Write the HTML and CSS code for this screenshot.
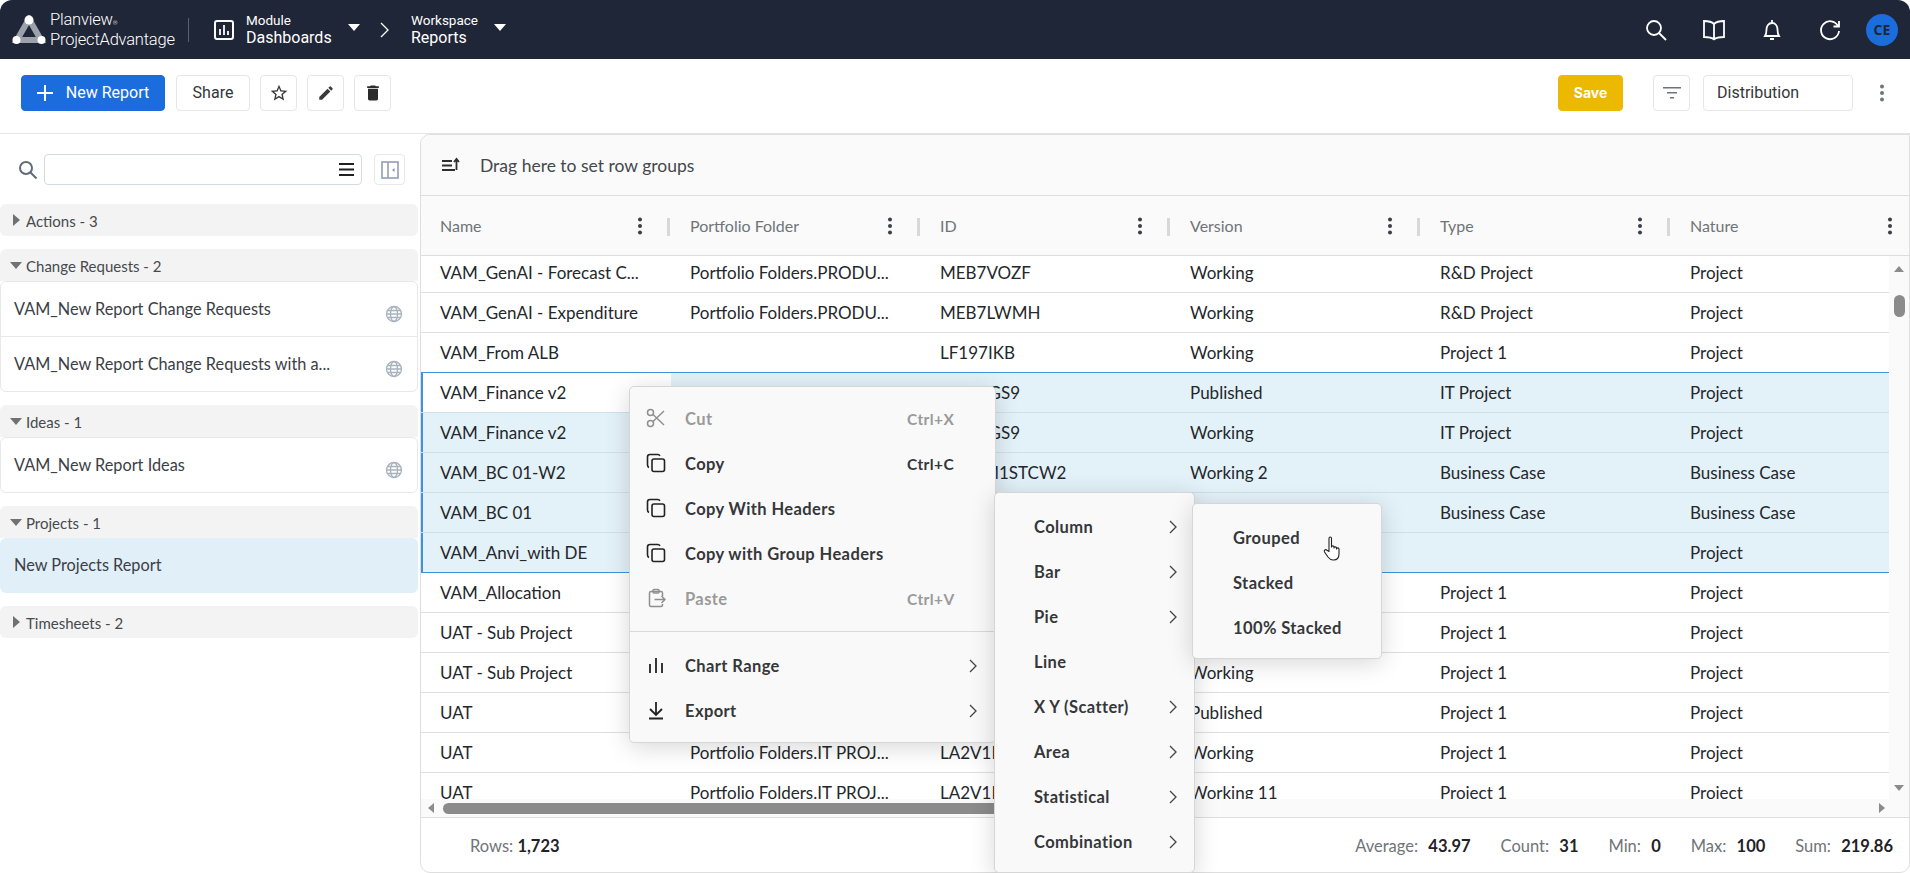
FILE: index.html
```html
<!DOCTYPE html>
<html lang="en">
<head>
    <meta charset="UTF-8">
    <title>Planview ProjectAdvantage - Reports</title>
    <link rel="stylesheet" href="styles.css">
</head>
<body>
    <svg class="icon-defs" width="0" height="0">
        <symbol id="i-kebab" viewBox="0 0 6 18"><circle cx="3" cy="2.5" r="2"/><circle cx="3" cy="9" r="2"/><circle cx="3" cy="15.5" r="2"/></symbol>
        <symbol id="i-globe" viewBox="0 0 18 18"><circle cx="9" cy="9" r="7.5"/><ellipse cx="9" cy="9" rx="3.5" ry="7.5"/><path d="M1.5 9h15M2.5 5.5h13M2.5 12.5h13"/></symbol>
        <symbol id="i-chevron" viewBox="0 0 8 14"><path d="M1 1l6 6-6 6"/></symbol>
        <symbol id="i-copy" viewBox="0 0 20 20"><path d="M3 14.5C2 14 1.5 13.5 1.5 12V4c0-1.5 1-2.5 2.5-2.5h8c1 0 1.5.5 2 1.2"/><rect x="6" y="6" width="12.5" height="12.5" rx="2"/></symbol>
    </svg>

    <header class="topbar">
        <div class="logo">
            <svg class="logo-mark" width="34" height="30" viewBox="0 0 34 30">
                <path d="M17 4 L5 25 H29 Z" fill="none" stroke="#9da1aa" stroke-width="6"/>
                <circle cx="17" cy="5" r="4.5" fill="#fff"/>
                <circle cx="4.5" cy="25" r="4" fill="#fff"/>
                <circle cx="29.5" cy="25" r="4" fill="#fff"/>
            </svg>
            <div class="logo-text">
                <span>Planview<small>®</small></span>
                <span>ProjectAdvantage</span>
            </div>
        </div>
        <div class="topbar-divider"></div>
        <svg class="nav-icon" width="20" height="20" viewBox="0 0 20 20" fill="none" stroke="#fff" stroke-width="2">
            <rect x="1" y="1" width="18" height="18" rx="2"/>
            <path d="M6 9v6M10 5v10M14 11v4" stroke-width="1.8"/>
        </svg>
        <div class="crumb crumb-module">
            <span class="crumb-label">Module</span>
            <span class="crumb-value">Dashboards</span>
        </div>
        <span class="caret"></span>
        <svg class="crumb-sep" width="12" height="18" viewBox="0 0 12 18" fill="none" stroke="#fff" stroke-width="1.3">
            <path d="M2 2l7 7-7 7"/>
        </svg>
        <div class="crumb crumb-workspace">
            <span class="crumb-label">Workspace</span>
            <span class="crumb-value">Reports</span>
        </div>
        <span class="caret"></span>

        <div class="topbar-icons">
            <svg width="24" height="24" viewBox="0 0 24 24" fill="none" stroke="#fff" stroke-width="1.8">
                <circle cx="10" cy="10" r="7"/>
                <path d="M15 15l7 7"/>
            </svg>
            <svg width="24" height="24" viewBox="0 0 24 24" fill="none" stroke="#fff" stroke-width="1.8">
                <path d="M12 6C10 4 6 3 2 3v16c4 0 8 .6 10 2.4 2-1.8 6-2.4 10-2.4V3c-4 0-8 1-10 3zM12 6v15"/>
            </svg>
            <svg width="24" height="24" viewBox="0 0 24 24" fill="none" stroke="#fff" stroke-width="1.8">
                <path d="M5 18c1-1.5 1.5-3 1.5-6.5C6.5 8 8.5 5 12 5s5.5 3 5.5 6.5c0 3.5.5 5 1.5 6.5zM12 2v3M10 21h4"/>
            </svg>
            <svg width="24" height="24" viewBox="0 0 24 24" fill="none" stroke="#fff" stroke-width="1.8">
                <path d="M20 8A9 9 0 1 0 21 13M21 3v5.5h-5.5"/>
            </svg>
            <div class="avatar">CE</div>
        </div>
    </header>

    <div class="toolbar">
        <button class="btn btn-primary">
            <svg width="16" height="16" viewBox="0 0 16 16" stroke="#fff" stroke-width="2"><path d="M8 0v16M0 8h16"/></svg>
            New Report
        </button>
        <button class="btn btn-share">Share</button>
        <button class="btn btn-icon">
            <svg width="20" height="20" viewBox="0 0 24 24" fill="#3a3a3a"><path d="M22 9.24l-7.19-.62L12 2 9.19 8.63 2 9.24l5.46 4.73L5.82 21 12 17.27 18.18 21l-1.63-7.03L22 9.24zM12 15.4l-3.76 2.27 1-4.28-3.32-2.88 4.38-.38L12 6.1l1.71 4.04 4.38.38-3.32 2.88 1 4.28L12 15.4z"/></svg>
        </button>
        <button class="btn btn-icon">
            <svg width="18" height="18" viewBox="0 0 24 24" fill="#3a3a3a"><path d="M3 17.25V21h3.75L17.81 9.94l-3.75-3.75L3 17.25zM20.71 7.04a1 1 0 0 0 0-1.41l-2.34-2.34a1 1 0 0 0-1.41 0l-1.83 1.83 3.75 3.75 1.83-1.83z"/></svg>
        </button>
        <button class="btn btn-icon">
            <svg width="20" height="20" viewBox="0 0 24 24" fill="#2b2b2b"><path d="M6 19c0 1.1.9 2 2 2h8c1.1 0 2-.9 2-2V7H6v12zM19 4h-3.5l-1-1h-5l-1 1H5v2h14V4z"/></svg>
        </button>

        <button class="btn btn-save">Save</button>
        <button class="btn btn-icon btn-filter">
            <svg width="18" height="14" viewBox="0 0 18 14" fill="#70757a"><path d="M0 1h18v1.6H0zM4 6h10v1.6H4zM7 11h4v1.6H7z"/></svg>
        </button>
        <div class="view-select">Distribution</div>
        <svg class="toolbar-kebab" width="6" height="18" fill="#70757a"><use href="#i-kebab"/></svg>
    </div>

    <main class="content">
        <aside class="sidebar">
            <div class="side-search">
                <svg width="20" height="20" viewBox="0 0 20 20" fill="none" stroke="#5f6b76" stroke-width="2">
                    <circle cx="8" cy="8" r="6"/><path d="M12.5 12.5l6 6"/>
                </svg>
                <div class="side-input">
                    <svg width="15" height="13" viewBox="0 0 15 13" fill="#1f1f1f"><path d="M0 0h15v2H0zM0 5.5h15v2H0zM0 11h15v2H0z"/></svg>
                </div>
                <button class="side-collapse">
                    <svg width="18" height="18" viewBox="0 0 18 18" fill="none" stroke="#9aa3b8" stroke-width="1.7">
                        <rect x="1" y="1" width="16" height="16"/><path d="M7 1v16"/>
                        <path d="M13.5 7v4L11 9z" fill="#8a94ad" stroke="none"/>
                    </svg>
                </button>
            </div>

            <div class="side-group">
                <div class="group-head"><span class="arrow-right"></span>Actions - 3</div>
            </div>

            <div class="side-group">
                <div class="group-head"><span class="arrow-down"></span>Change Requests - 2</div>
                <div class="group-card">
                    <div class="report-item">
                        <span>VAM_New Report Change Requests</span>
                        <svg class="globe" width="18" height="18"><use href="#i-globe"/></svg>
                    </div>
                    <div class="report-item report-item-tall">
                        <span>VAM_New Report Change Requests with a...</span>
                        <svg class="globe" width="18" height="18"><use href="#i-globe"/></svg>
                    </div>
                </div>
            </div>

            <div class="side-group">
                <div class="group-head"><span class="arrow-down"></span>Ideas - 1</div>
                <div class="group-card">
                    <div class="report-item">
                        <span>VAM_New Report Ideas</span>
                        <svg class="globe" width="18" height="18"><use href="#i-globe"/></svg>
                    </div>
                </div>
            </div>

            <div class="side-group">
                <div class="group-head"><span class="arrow-down"></span>Projects - 1</div>
                <div class="report-item report-item-active"><span>New Projects Report</span></div>
            </div>

            <div class="side-group">
                <div class="group-head"><span class="arrow-right"></span>Timesheets - 2</div>
            </div>
        </aside>

        <section class="grid-panel">
            <div class="group-bar">
                <svg width="20" height="16" viewBox="0 0 20 16" fill="none" stroke="#2f2f2f" stroke-width="1.8">
                    <path d="M1 4h10M1 8.5h10M1 13h13M15.5 13V2.5M13 5l2.5-3L18 5"/>
                </svg>
                <span>Drag here to set row groups</span>
            </div>

            <div class="grid-head">
                <div class="head-cell"><span>Name</span><svg class="kebab" width="6" height="18"><use href="#i-kebab"/></svg><i class="head-sep"></i></div>
                <div class="head-cell"><span>Portfolio Folder</span><svg class="kebab" width="6" height="18"><use href="#i-kebab"/></svg><i class="head-sep"></i></div>
                <div class="head-cell"><span>ID</span><svg class="kebab" width="6" height="18"><use href="#i-kebab"/></svg><i class="head-sep"></i></div>
                <div class="head-cell"><span>Version</span><svg class="kebab" width="6" height="18"><use href="#i-kebab"/></svg><i class="head-sep"></i></div>
                <div class="head-cell"><span>Type</span><svg class="kebab" width="6" height="18"><use href="#i-kebab"/></svg><i class="head-sep"></i></div>
                <div class="head-cell"><span>Nature</span><svg class="kebab" width="6" height="18"><use href="#i-kebab"/></svg></div>
            </div>

            <div class="grid-body">
                <div class="grid-rows">
                    <div class="rows-inner">
                        <div class="row"><div class="cell">VAM_GenAI - Forecast C...</div><div class="cell">Portfolio Folders.PRODU...</div><div class="cell">MEB7VOZF</div><div class="cell">Working</div><div class="cell">R&amp;D Project</div><div class="cell">Project</div></div>
                        <div class="row"><div class="cell">VAM_GenAI - Expenditure</div><div class="cell">Portfolio Folders.PRODU...</div><div class="cell">MEB7LWMH</div><div class="cell">Working</div><div class="cell">R&amp;D Project</div><div class="cell">Project</div></div>
                        <div class="row"><div class="cell">VAM_From ALB</div><div class="cell"></div><div class="cell">LF197IKB</div><div class="cell">Working</div><div class="cell">Project 1</div><div class="cell">Project</div></div>
                        <div class="row is-selected range-top"><div class="cell">VAM_Finance v2</div><div class="cell"></div><div class="cell">LF19KGS9</div><div class="cell">Published</div><div class="cell">IT Project</div><div class="cell">Project</div></div>
                        <div class="row is-selected"><div class="cell">VAM_Finance v2</div><div class="cell"></div><div class="cell">LF19KGS9</div><div class="cell">Working</div><div class="cell">IT Project</div><div class="cell">Project</div></div>
                        <div class="row is-selected"><div class="cell">VAM_BC 01-W2</div><div class="cell"></div><div class="cell">LB2QM1STCW2</div><div class="cell">Working 2</div><div class="cell">Business Case</div><div class="cell">Business Case</div></div>
                        <div class="row is-selected"><div class="cell">VAM_BC 01</div><div class="cell"></div><div class="cell"></div><div class="cell"></div><div class="cell">Business Case</div><div class="cell">Business Case</div></div>
                        <div class="row is-selected range-bottom"><div class="cell">VAM_Anvi_with DE</div><div class="cell"></div><div class="cell"></div><div class="cell"></div><div class="cell"></div><div class="cell">Project</div></div>
                        <div class="row"><div class="cell">VAM_Allocation</div><div class="cell"></div><div class="cell"></div><div class="cell"></div><div class="cell">Project 1</div><div class="cell">Project</div></div>
                        <div class="row"><div class="cell">UAT - Sub Project</div><div class="cell"></div><div class="cell"></div><div class="cell"></div><div class="cell">Project 1</div><div class="cell">Project</div></div>
                        <div class="row"><div class="cell">UAT - Sub Project</div><div class="cell"></div><div class="cell"></div><div class="cell">Working</div><div class="cell">Project 1</div><div class="cell">Project</div></div>
                        <div class="row"><div class="cell">UAT</div><div class="cell"></div><div class="cell"></div><div class="cell">Published</div><div class="cell">Project 1</div><div class="cell">Project</div></div>
                        <div class="row"><div class="cell">UAT</div><div class="cell">Portfolio Folders.IT PROJ...</div><div class="cell">LA2V1N</div><div class="cell">Working</div><div class="cell">Project 1</div><div class="cell">Project</div></div>
                        <div class="row"><div class="cell">UAT</div><div class="cell">Portfolio Folders.IT PROJ...</div><div class="cell">LA2V1N</div><div class="cell">Working 11</div><div class="cell">Project 1</div><div class="cell">Project</div></div>
                    </div>
                </div>
                <div class="vscroll">
                    <span class="sb-up"></span>
                    <span class="vthumb"></span>
                    <span class="sb-down"></span>
                </div>
            </div>
            <div class="hscroll">
                <span class="sb-left"></span>
                <span class="hthumb"></span>
                <span class="sb-right"></span>
            </div>

            <footer class="status-bar">
                <div class="stat-rows">Rows: <b>1,723</b></div>
                <div class="stats">
                    <span>Average: <b>43.97</b></span>
                    <span>Count: <b>31</b></span>
                    <span>Min: <b>0</b></span>
                    <span>Max: <b>100</b></span>
                    <span>Sum: <b>219.86</b></span>
                </div>
            </footer>
        </section>
    </main>

    <!-- context menus sit over the grid -->
    <div class="menu menu-main">
        <div class="menu-item is-disabled">
            <svg class="menu-icon" width="20" height="20" viewBox="0 0 20 20" fill="none" stroke="#8f8f8f" stroke-width="1.5">
                <circle cx="4.5" cy="4.5" r="3"/><circle cx="4.5" cy="15.5" r="3"/><path d="M7 6.5L18 17M7 13.5L18 3"/>
            </svg>
            <span class="menu-label">Cut</span><span class="menu-key">Ctrl+X</span>
        </div>
        <div class="menu-item">
            <svg class="menu-icon icon-copy" width="20" height="20"><use href="#i-copy"/></svg>
            <span class="menu-label">Copy</span><span class="menu-key">Ctrl+C</span>
        </div>
        <div class="menu-item">
            <svg class="menu-icon icon-copy" width="20" height="20"><use href="#i-copy"/></svg>
            <span class="menu-label">Copy With Headers</span>
        </div>
        <div class="menu-item">
            <svg class="menu-icon icon-copy" width="20" height="20"><use href="#i-copy"/></svg>
            <span class="menu-label">Copy with Group Headers</span>
        </div>
        <div class="menu-item is-disabled">
            <svg class="menu-icon" width="20" height="20" viewBox="0 0 20 20" fill="none" stroke="#8f8f8f" stroke-width="1.5">
                <path d="M16.5 8V5c0-1-.6-1.5-1.5-1.5H5C4 3.5 3.5 4 3.5 5v12c0 1 .5 1.5 1.5 1.5h10c1 0 1.5-.5 1.5-1.5v-1"/><rect x="7" y="1.5" width="6" height="3.5" rx="1"/><path d="M8.5 11.5H19M15.5 8l3.5 3.5-3.5 3.5"/>
            </svg>
            <span class="menu-label">Paste</span><span class="menu-key">Ctrl+V</span>
        </div>
        <div class="menu-rule"></div>
        <div class="menu-item">
            <svg class="menu-icon" width="20" height="20" viewBox="0 0 20 20" fill="none" stroke="#222" stroke-width="1.8">
                <path d="M4 9v9M10 3v15M16 8v10"/>
            </svg>
            <span class="menu-label">Chart Range</span>
            <svg class="menu-chevron" width="8" height="14"><use href="#i-chevron"/></svg>
        </div>
        <div class="menu-item">
            <svg class="menu-icon" width="20" height="20" viewBox="0 0 20 20" fill="none" stroke="#222" stroke-width="1.8">
                <path d="M10 2v12M4 9l6 6 6-6M3 18.5h14"/>
            </svg>
            <span class="menu-label">Export</span>
            <svg class="menu-chevron" width="8" height="14"><use href="#i-chevron"/></svg>
        </div>
    </div>

    <div class="menu menu-chart">
        <div class="menu-item"><span class="menu-label">Column</span><svg class="menu-chevron" width="8" height="14"><use href="#i-chevron"/></svg></div>
        <div class="menu-item"><span class="menu-label">Bar</span><svg class="menu-chevron" width="8" height="14"><use href="#i-chevron"/></svg></div>
        <div class="menu-item"><span class="menu-label">Pie</span><svg class="menu-chevron" width="8" height="14"><use href="#i-chevron"/></svg></div>
        <div class="menu-item"><span class="menu-label">Line</span></div>
        <div class="menu-item"><span class="menu-label">X Y (Scatter)</span><svg class="menu-chevron" width="8" height="14"><use href="#i-chevron"/></svg></div>
        <div class="menu-item"><span class="menu-label">Area</span><svg class="menu-chevron" width="8" height="14"><use href="#i-chevron"/></svg></div>
        <div class="menu-item"><span class="menu-label">Statistical</span><svg class="menu-chevron" width="8" height="14"><use href="#i-chevron"/></svg></div>
        <div class="menu-item"><span class="menu-label">Combination</span><svg class="menu-chevron" width="8" height="14"><use href="#i-chevron"/></svg></div>
    </div>

    <div class="menu menu-sub">
        <div class="menu-item"><span class="menu-label">Grouped</span></div>
        <div class="menu-item"><span class="menu-label">Stacked</span></div>
        <div class="menu-item"><span class="menu-label">100% Stacked</span></div>
    </div>

    <svg class="hand-cursor" width="20" height="26" viewBox="0 0 20 26" fill="#fff" stroke="#222" stroke-width="1.1" stroke-linejoin="round">
        <path d="M6 2.5c0-2 2.5-2 2.5 0V11c0-1.5 2.5-1.5 2.5 0v1c0-1.5 2.5-1.5 2.5 0v1c0-1.5 2.5-1.5 2.5 0v5c0 3.5-2 6-5.5 6H10c-2.5 0-3.5-1-5-3l-3.5-5c-1-1.8 1-3 2.5-1.8L6 15.5z"/>
    </svg>
</body>
</html>
```

FILE: styles.css
```css
* {
    box-sizing: border-box;
}

html, body {
    margin: 0;
    padding: 0;
    height: 873px;
    overflow: hidden;
    background: #fff;
    font-family: Lato, "Liberation Sans", sans-serif;
    color: #2b2f33;
}

body {
    display: flex;
    flex-direction: column;
}

button {
    font-family: inherit;
}

.icon-defs {
    position: absolute;
}

/* top bar */
.topbar {
    height: 59px;
    flex: none;
    display: flex;
    align-items: center;
    background: #1f2637;
    color: #fff;
    border-radius: 12px 12px 0 0;
    font-family: Roboto, "Liberation Sans", sans-serif;
    padding-left: 12px;
}

.logo {
    display: flex;
    align-items: center;
    width: 176px;
}

.logo-mark {
    flex: none;
    margin-right: 4px;
}

.logo-text {
    display: flex;
    flex-direction: column;
    font-size: 16.5px;
    font-weight: 300;
    line-height: 17px;
    letter-spacing: -0.2px;
    white-space: nowrap;
}

.logo-text small {
    font-size: 6px;
}

.topbar-divider {
    width: 1px;
    height: 24px;
    background: #596073;
    margin-right: 25px;
}

.nav-icon {
    margin-right: 12px;
}

.crumb {
    display: flex;
    flex-direction: column;
}

.crumb-label {
    font-size: 13.5px;
    line-height: 15px;
}

.crumb-value {
    font-size: 16px;
    line-height: 19px;
}

.crumb-module {
    width: 102px;
}

.crumb-workspace {
    width: 83px;
}

.caret {
    width: 0;
    height: 0;
    border-left: 6.5px solid transparent;
    border-right: 6.5px solid transparent;
    border-top: 7px solid #fff;
    margin-top: -4px;
}

.crumb-sep {
    margin: 0 20px 0 19px;
}

.topbar-icons {
    margin-left: auto;
    display: flex;
    align-items: center;
    gap: 34px;
    padding-right: 12px;
}

.avatar {
    width: 32px;
    height: 32px;
    margin-left: -10px;
    border-radius: 50%;
    background: #1b6ddd;
    color: #1f2637;
    font-size: 14px;
    font-weight: 700;
    text-align: center;
    line-height: 32px;
    font-family: "Open Sans", sans-serif;
}

/* toolbar */
.toolbar {
    height: 75px;
    flex: none;
    display: flex;
    align-items: center;
    padding: 0 25px 7px 21px;
    border-bottom: 1px solid #e4e4e4;
    font-family: Roboto, "Liberation Sans", sans-serif;
}

.btn {
    height: 36px;
    border: 1px solid #e6e6e6;
    border-radius: 4px;
    background: #fff;
    font-size: 16px;
    color: #33363a;
    padding: 0;
    display: flex;
    align-items: center;
    justify-content: center;
}

.btn-primary {
    width: 144px;
    background: #1b6ddd;
    border-color: #1b6ddd;
    color: #fff;
    gap: 13px;
    margin-right: 11px;
}

.btn-share {
    width: 74px;
    margin-right: 10px;
}

.btn-icon {
    width: 37px;
    margin-right: 10px;
}

.btn-save {
    width: 65px;
    margin-left: auto;
    margin-right: 30px;
    background: #ecb800;
    border-color: #ecb800;
    color: #fff;
    font-weight: 700;
    font-family: Inter, sans-serif;
    font-size: 14px;
}

.btn-filter {
    margin-right: 13px;
}

.view-select {
    width: 150px;
    height: 36px;
    border: 1px solid #e6e6e6;
    border-radius: 4px;
    font-size: 16px;
    line-height: 34px;
    padding-left: 13px;
    color: #33363a;
}

.toolbar-kebab {
    margin-left: 26px;
}

/* main area */
.content {
    flex: 1;
    min-height: 0;
    display: flex;
}

.sidebar {
    width: 420px;
    flex: none;
    padding: 20px 2px 0 0;
}

.side-search {
    display: flex;
    align-items: center;
    height: 31px;
    padding-left: 18px;
    margin-bottom: 19px;
}

.side-input {
    width: 318px;
    height: 31px;
    margin-left: 6px;
    border: 1px solid #d5dae0;
    border-radius: 4px;
    display: flex;
    align-items: center;
    justify-content: flex-end;
    padding-right: 7px;
}

.side-collapse {
    width: 31px;
    height: 31px;
    margin-left: 12px;
    padding: 0;
    background: #fff;
    border: 1px solid #e8e8e8;
    border-radius: 4px;
    display: flex;
    align-items: center;
    justify-content: center;
}

.side-group {
    margin-bottom: 13px;
}

.group-head {
    height: 32px;
    padding: 2px 0 0 26px;
    background: #f3f3f3;
    border-radius: 6px 6px 0 0;
    display: flex;
    align-items: center;
    font-size: 15px;
    color: #464a4e;
    position: relative;
}

.side-group > .group-head:only-child {
    border-radius: 6px;
}

.arrow-right {
    position: absolute;
    left: 13px;
    top: 10px;
    border-top: 6px solid transparent;
    border-bottom: 6px solid transparent;
    border-left: 7px solid #6e7272;
}

.arrow-down {
    position: absolute;
    left: 10px;
    top: 13px;
    border-left: 6px solid transparent;
    border-right: 6px solid transparent;
    border-top: 7px solid #6e7272;
}

.group-card {
    border: 1px solid #e8e8e8;
    border-radius: 6px;
    background: #fff;
}

.report-item {
    height: 54px;
    display: flex;
    justify-content: space-between;
    padding: 16px 14px 0 13px;
    font-size: 16.3px;
    line-height: 22px;
    color: #3c4046;
}

.report-item + .report-item {
    border-top: 1px solid #e8e8e8;
}

.report-item-tall {
    height: 55px;
}

.globe {
    margin-top: 7px;
    flex: none;
    fill: none;
    stroke: #a8b2be;
    stroke-width: 1.3;
}

.report-item-active {
    height: 55px;
    background: #e1eff9;
    border-radius: 6px;
    padding-left: 14px;
}

/* grid */
.grid-panel {
    flex: 1;
    min-width: 0;
    display: flex;
    flex-direction: column;
    border: 1px solid #dedede;
    border-radius: 10px 0 10px 10px;
    overflow: hidden;
}

.group-bar {
    height: 61px;
    flex: none;
    display: flex;
    align-items: center;
    gap: 19px;
    padding-left: 20px;
    background: #fafafa;
    border-bottom: 1px solid #dedede;
    font-size: 17.5px;
    color: #44484c;
}

.grid-head {
    height: 60px;
    flex: none;
    display: flex;
    background: #fafafa;
    border-bottom: 1px solid #dedede;
}

.head-cell {
    width: 250px;
    flex: none;
    padding-left: 19px;
    display: flex;
    align-items: center;
    position: relative;
    font-size: 16px;
    color: #6f7478;
}

.kebab {
    position: absolute;
    left: 216px;
    top: 21px;
    fill: #3a3f45;
}

.head-sep {
    position: absolute;
    left: 246px;
    top: 22px;
    width: 3px;
    height: 18px;
    background: #d8d8d8;
}

.grid-body {
    flex: 1;
    min-height: 0;
    display: flex;
}

.grid-rows {
    flex: 1;
    min-width: 0;
    overflow: hidden;
}

.rows-inner {
    margin-top: -3px;
}

.row {
    display: flex;
    height: 40px;
    border-bottom: 1px solid #dedede;
}

.cell {
    width: 250px;
    flex: none;
    padding-left: 19px;
    font-size: 17px;
    line-height: 39px;
    color: #24272b;
    white-space: nowrap;
}

.row.is-selected {
    background: #e3f1f8;
    border-bottom-color: #d3dfe6;
}

.row.is-selected .cell:first-child {
    box-shadow: inset 2px 0 0 #3e93e0;
}

.row.range-top {
    box-shadow: 0 -1px 0 #3e93e0;
}

.row.range-top .cell:first-child {
    background: #fff;
}

.row.range-bottom {
    border-bottom-color: #3e93e0;
}

.vscroll {
    width: 20px;
    flex: none;
    background: #fafafa;
    display: flex;
    flex-direction: column;
    align-items: center;
    padding: 10px 0 8px;
}

.sb-up {
    border-left: 5px solid transparent;
    border-right: 5px solid transparent;
    border-bottom: 6px solid #8b8b8b;
}

.vthumb {
    width: 11px;
    height: 22px;
    margin-top: 23px;
    border-radius: 6px;
    background: #8b8b8b;
}

.sb-down {
    margin-top: auto;
    border-left: 5px solid transparent;
    border-right: 5px solid transparent;
    border-top: 6px solid #8b8b8b;
}

.hscroll {
    height: 19px;
    flex: none;
    display: flex;
    align-items: center;
    background: #fafafa;
    border-bottom: 1px solid #dedede;
    padding: 0 24px 0 7px;
}

.sb-left {
    border-top: 5px solid transparent;
    border-bottom: 5px solid transparent;
    border-right: 6px solid #8b8b8b;
}

.hthumb {
    width: 620px;
    height: 11px;
    margin-left: 9px;
    border-radius: 6px;
    background: #8b8b8b;
}

.sb-right {
    margin-left: auto;
    border-top: 5px solid transparent;
    border-bottom: 5px solid transparent;
    border-left: 6px solid #8b8b8b;
}

.status-bar {
    height: 54px;
    flex: none;
    display: flex;
    align-items: center;
    justify-content: space-between;
    padding: 2px 16px 0 49px;
    font-size: 16.5px;
    color: #6f7478;
}

.status-bar b {
    color: #1f2226;
    font-weight: 700;
}

.stats {
    display: flex;
    gap: 30px;
}

.stats b {
    margin-left: 6px;
}

/* context menus */
.menu {
    position: absolute;
    background: #f9f9f9;
    border: 1px solid #d6d6d6;
    border-radius: 5px;
    box-shadow: 0 4px 24px rgba(0, 0, 0, 0.16);
    font-size: 16.5px;
    font-weight: 700;
    letter-spacing: 0.4px;
    color: #35373a;
}

.menu-main {
    left: 629px;
    top: 386px;
    width: 367px;
    height: 357px;
    padding-top: 9px;
}

.menu-chart {
    left: 994px;
    top: 492px;
    width: 201px;
    height: 381px;
    padding-top: 11px;
}

.menu-sub {
    left: 1192px;
    top: 503px;
    width: 190px;
    height: 156px;
    padding-top: 11px;
}

.menu-item {
    height: 45px;
    display: flex;
    align-items: center;
    position: relative;
    padding-left: 55px;
}

.menu-chart .menu-item {
    padding-left: 39px;
}

.menu-sub .menu-item {
    padding-left: 40px;
}

.menu-icon {
    position: absolute;
    left: 16px;
    top: 12px;
}

.icon-copy {
    fill: none;
    stroke: #222;
    stroke-width: 1.6;
}

.menu-key {
    position: absolute;
    left: 277px;
    font-size: 15.5px;
}

.menu-chevron {
    position: absolute;
    right: 18px;
    top: 16px;
    fill: none;
    stroke: #444;
    stroke-width: 1.3;
}

.menu-chart .menu-chevron {
    right: 17px;
}

.is-disabled {
    color: #9a9a9a;
}

.menu-rule {
    height: 1px;
    background: #d9d9d9;
    margin: 10px 0 11px;
}

.hand-cursor {
    position: absolute;
    left: 1323px;
    top: 536px;
}
```
